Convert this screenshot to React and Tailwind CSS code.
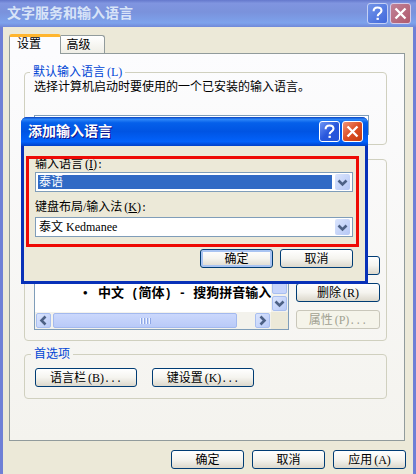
import { useState } from 'react'

const serif = "font-['Liberation_Serif','Noto_Sans_CJK_SC',serif]"

const btn = 'flex h-[19px] items-center justify-center rounded-[3px] border border-[#003c74] bg-gradient-to-b from-white via-[#f5f4ef] to-[#dcd8cc] text-xs leading-4 whitespace-nowrap text-black'

// half-width latin punctuation inside chinese labels
function En({ children }) {
  return <span className="font-['Liberation_Mono',monospace] text-[10px] leading-none">{children}</span>
}

function Key({ k, tail, underline }) {
  return (
    <>
      <span className="pl-[2px]">(<span className={underline ? 'underline' : ''}>{k}</span>)</span>
      {tail && <En>{tail}</En>}
    </>
  )
}

function HelpIcon() {
  return (
    <svg viewBox="0 0 21 21" className="h-full w-full" fill="none" stroke="white" strokeWidth="2.3">
      <path d="M6.2 8C6.2 5.2 8 3.9 10.5 3.9s4.4 1.3 4.4 3.6c0 2.9-4.2 2.9-4.2 6.1" />
      <path d="M9.4 16.4h2.6" />
    </svg>
  )
}

function CloseIcon() {
  return (
    <svg viewBox="0 0 21 21" className="h-full w-full" fill="none" stroke="white" strokeWidth="2.6">
      <path d="M5 5l11 11M16 5l-11 11" />
    </svg>
  )
}

function Arrow({ dir = 'down' }) {
  const d = {
    down: 'M3.5 5.5l4 4 4-4',
    left: 'M9.5 3.5l-4 4 4 4',
    right: 'M5.5 3.5l4 4-4 4',
  }[dir]
  return (
    <svg viewBox="0 0 15 15" className="h-[15px] w-[15px] shrink-0" fill="none" stroke="#4d6185" strokeWidth="2.6">
      <path d={d} />
    </svg>
  )
}

function Combo({ id, value, onChange, options, selected }) {
  return (
    <div className="flex h-5 items-center border border-[#7f9db9] bg-white p-[2px]">
      <select
        id={id}
        value={value}
        onChange={onChange}
        className={`h-[14px] w-full appearance-none pl-px text-xs leading-[14px] outline-none ${selected ? 'bg-[#316ac5] text-white' : 'bg-white text-black'}`}
      >
        {options.map((o) => <option key={o}>{o}</option>)}
      </select>
      <span className="pointer-events-none ml-[3px] flex h-4 w-[15px] shrink-0 items-center justify-center rounded-[2px] bg-gradient-to-br from-[#dbe5fd] to-[#b5c7f5]">
        <Arrow />
      </span>
    </div>
  )
}

function ScrollBtn({ dir, label }) {
  return (
    <button type="button" aria-label={label} className="flex h-[15px] w-[15px] shrink-0 items-center justify-center rounded-[2px] border border-[#a9bff0] bg-gradient-to-br from-[#dbe5fd] to-[#b9caf7]">
      <Arrow dir={dir} />
    </button>
  )
}

function Group({ title, className, children }) {
  return (
    <fieldset className={`min-w-0 rounded-[4px] border border-[#d0d0bf] ${className}`}>
      {title && <legend className="-ml-1 h-[14px] px-[3px] text-xs leading-[14px] text-[#0046d5]">{title}</legend>}
      {children}
    </fieldset>
  )
}

function AddLanguage() {
  const [lang, setLang] = useState('泰语')
  const [layout, setLayout] = useState('泰文 Kedmanee')

  return (
    <div role="dialog" aria-labelledby="add-title" className="absolute top-[117px] left-[18px] w-[347px] rounded-t-[6px] bg-[#0831b8] pb-[3px]">
      <div className="flex h-[29px] items-center gap-[2px] rounded-t-[6px] bg-linear-[180deg,#0842c0_0%,#2d86f8_8%,#0560ea_20%,#0054e3_50%,#0262fb_85%,#0040c8_100%] pr-[5px] pl-[7px]">
        <h2 id="add-title" className="flex-1 text-sm leading-5 font-bold text-white [text-shadow:1px_1px_#0f1089]">添加输入语言</h2>
        <button type="button" aria-label="帮助" className="h-[21px] w-[21px] rounded-[3px] border border-white bg-linear-[135deg,#6f96f5,#2857dc_50%,#2455d8]"><HelpIcon /></button>
        <button type="button" aria-label="关闭" className="h-[21px] w-[21px] rounded-[3px] border border-white bg-linear-[135deg,#ef9478,#dc4d24_50%,#c33c10]"><CloseIcon /></button>
      </div>
      <form className="mx-[3px] bg-[#ece9d8] pt-[10px] pr-3 pb-[13px] pl-[11px]" onSubmit={(e) => e.preventDefault()}>
        <label htmlFor="lang" className="block h-4 text-xs leading-4">输入语言<Key k="I" tail=":" underline /></label>
        <Combo id="lang" selected value={lang} onChange={(e) => setLang(e.target.value)} options={['泰语']} />
        <label htmlFor="layout" className="mt-[7px] mb-[2px] block h-4 text-xs leading-4">键盘布局/输入法<Key k="K" tail=":" underline /></label>
        <Combo id="layout" value={layout} onChange={(e) => setLayout(e.target.value)} options={['泰文 Kedmanee']} />
        <div className="mt-3 flex justify-end gap-[7px]">
          <button type="submit" className={`${btn} w-[73px] shadow-[inset_0_0_0_2px_#a9c4f2]`}>确定</button>
          <button type="button" className={`${btn} w-[73px]`}>取消</button>
        </div>
      </form>
      <div className="pointer-events-none absolute top-[39px] left-[5px] h-[91px] w-[333px] border-3 border-[#ee0a04]" />
    </div>
  )
}

export default function App() {
  const [tab, setTab] = useState('设置')

  return (
    <div className={`relative flex min-h-screen flex-col border-x-3 border-[#6f80d6] bg-[#ece9d8] text-black ${serif}`}>
      <header className="-mx-[3px] flex h-[27px] items-center gap-[2px] bg-linear-[180deg,#6478cc_0%,#8095e0_12%,#7a92dc_45%,#7da2ec_85%,#7088d8_100%] pr-[5px] pl-[7px]">
        <h1 className="flex-1 text-sm leading-5 font-bold text-[#d8e4f8]">文字服务和输入语言</h1>
        <button type="button" aria-label="帮助" className="h-[21px] w-[21px] rounded-[3px] border border-[#c3d0f5] bg-linear-[135deg,#7294e8,#4068dc]"><HelpIcon /></button>
        <button type="button" aria-label="关闭" className="h-[21px] w-[21px] rounded-[3px] border border-[#d5cbe8] bg-linear-[135deg,#c08297,#b0596c]"><CloseIcon /></button>
      </header>

      <main className="flex flex-1 flex-col pt-[6px] pr-2 pb-[6px] pl-[6px]">
        <div role="tablist" className="flex h-5 shrink-0 items-end">
          <button type="button" role="tab" aria-selected={tab === '设置'} onClick={() => setTab('设置')} className="relative z-10 -mb-px h-5 w-[52px] rounded-t-[3px] border border-t-3 border-b-0 border-[#919b9c] border-t-[#ffb52e] bg-[#fcfcfe] pr-3 pb-[2px] text-xs leading-[13px]">设置</button>
          <button type="button" role="tab" aria-selected={tab === '高级'} onClick={() => setTab('高级')} className="h-[18px] w-[44px] rounded-tr-[3px] border border-b-0 border-l-0 border-[#919b9c] bg-gradient-to-b from-white to-[#efeee6] pr-3 pl-1 text-xs leading-4">高级</button>
        </div>

        <section className="flex flex-1 flex-col border border-[#919b9c] bg-gradient-to-b from-[#fcfcfe] to-[#f4f3ee] pt-[11px] pr-[17px] pb-[41px] pl-[14px]">
          <Group title={<>默认输入语言<Key k="L" /></>} className="px-[9px] pb-[9px]">
            <p className="text-xs leading-4">选择计算机启动时要使用的一个已安装的输入语言。</p>
            <div className="mt-5 mr-2 h-5 border border-[#7f9db9] bg-white" />
          </Group>

          <Group className="mt-[14px] flex flex-1 items-end gap-[7px] pt-[46px] pr-[6px] pb-[10px] pl-[9px]">
            <div className="flex h-[124px] min-w-0 flex-1 flex-col border border-[#7f9db9] bg-white">
              <div className="flex min-h-0 flex-1">
                <ul className="flex min-w-0 flex-1 flex-col justify-end overflow-hidden pb-[11px] pl-[48px]">
                  <li className="flex text-[13px] leading-4 font-bold whitespace-nowrap">
                    <span className="w-[15px] shrink-0">•</span>
                    <span>中文<span className="font-['Liberation_Mono',monospace] text-xs leading-none"> (</span>简体<span className="font-['Liberation_Mono',monospace] text-xs leading-none">) - </span>搜狗拼音输入</span>
                  </li>
                </ul>
                <div className="flex w-[17px] shrink-0 flex-col items-center justify-end gap-[2px] bg-[#f3f2ec] pb-px">
                  <span className="w-[15px] flex-1 rounded-[2px] border border-[#a9bff0] bg-[#c6d4fb]" />
                  <ScrollBtn dir="down" label="向下滚动" />
                </div>
              </div>
              <div className="flex h-[17px] shrink-0 items-center bg-[#f3f2ec] pl-px">
                <ScrollBtn dir="left" label="向左滚动" />
                <span className="ml-[2px] flex h-[15px] w-[184px] items-center justify-center gap-px rounded-[2px] border border-[#a3b9ee] bg-gradient-to-b from-[#cbd8fc] to-[#b9caf8]">
                  {[0, 1, 2, 3].map((i) => <i key={i} className="h-[6px] w-[2px] border-l border-[#eef4fe] bg-[#8ca6e6]" />)}
                </span>
                <span className="flex-1" />
                <ScrollBtn dir="right" label="向右滚动" />
                <span className="ml-px h-full w-[17px] bg-[#ece9d8]" />
              </div>
            </div>
            <div className="flex w-[84px] shrink-0 flex-col gap-2 pb-px">
              <button type="button" aria-label="添加" className={btn} />
              <button type="button" className={btn}><span>删除<Key k="R" /></span></button>
              <button type="button" disabled className="flex h-[19px] items-center justify-center rounded-[3px] border border-[#c9c7ba] bg-[#f5f4ea] text-xs leading-4 whitespace-nowrap text-[#a1a192]"><span>属性<Key k="P" tail="..." /></span></button>
            </div>
          </Group>

          <Group title="首选项" className="mt-[6px] px-[10px] pb-[11px]">
            <div className="mt-[7px] flex gap-[15px]">
              <button type="button" className={`${btn} w-[102px]`}><span>语言栏<Key k="B" tail="..." /></span></button>
              <button type="button" className={`${btn} w-[102px]`}><span>键设置<Key k="K" tail="..." /></span></button>
            </div>
          </Group>
        </section>

        <footer className="-mr-px mt-[9px] flex justify-end gap-2">
          <button type="button" className={`${btn} w-[73px]`}>确定</button>
          <button type="button" className={`${btn} w-[73px]`}>取消</button>
          <button type="button" className={`${btn} w-[73px]`}><span>应用<Key k="A" /></span></button>
        </footer>
      </main>

      <AddLanguage />
    </div>
  )
}
